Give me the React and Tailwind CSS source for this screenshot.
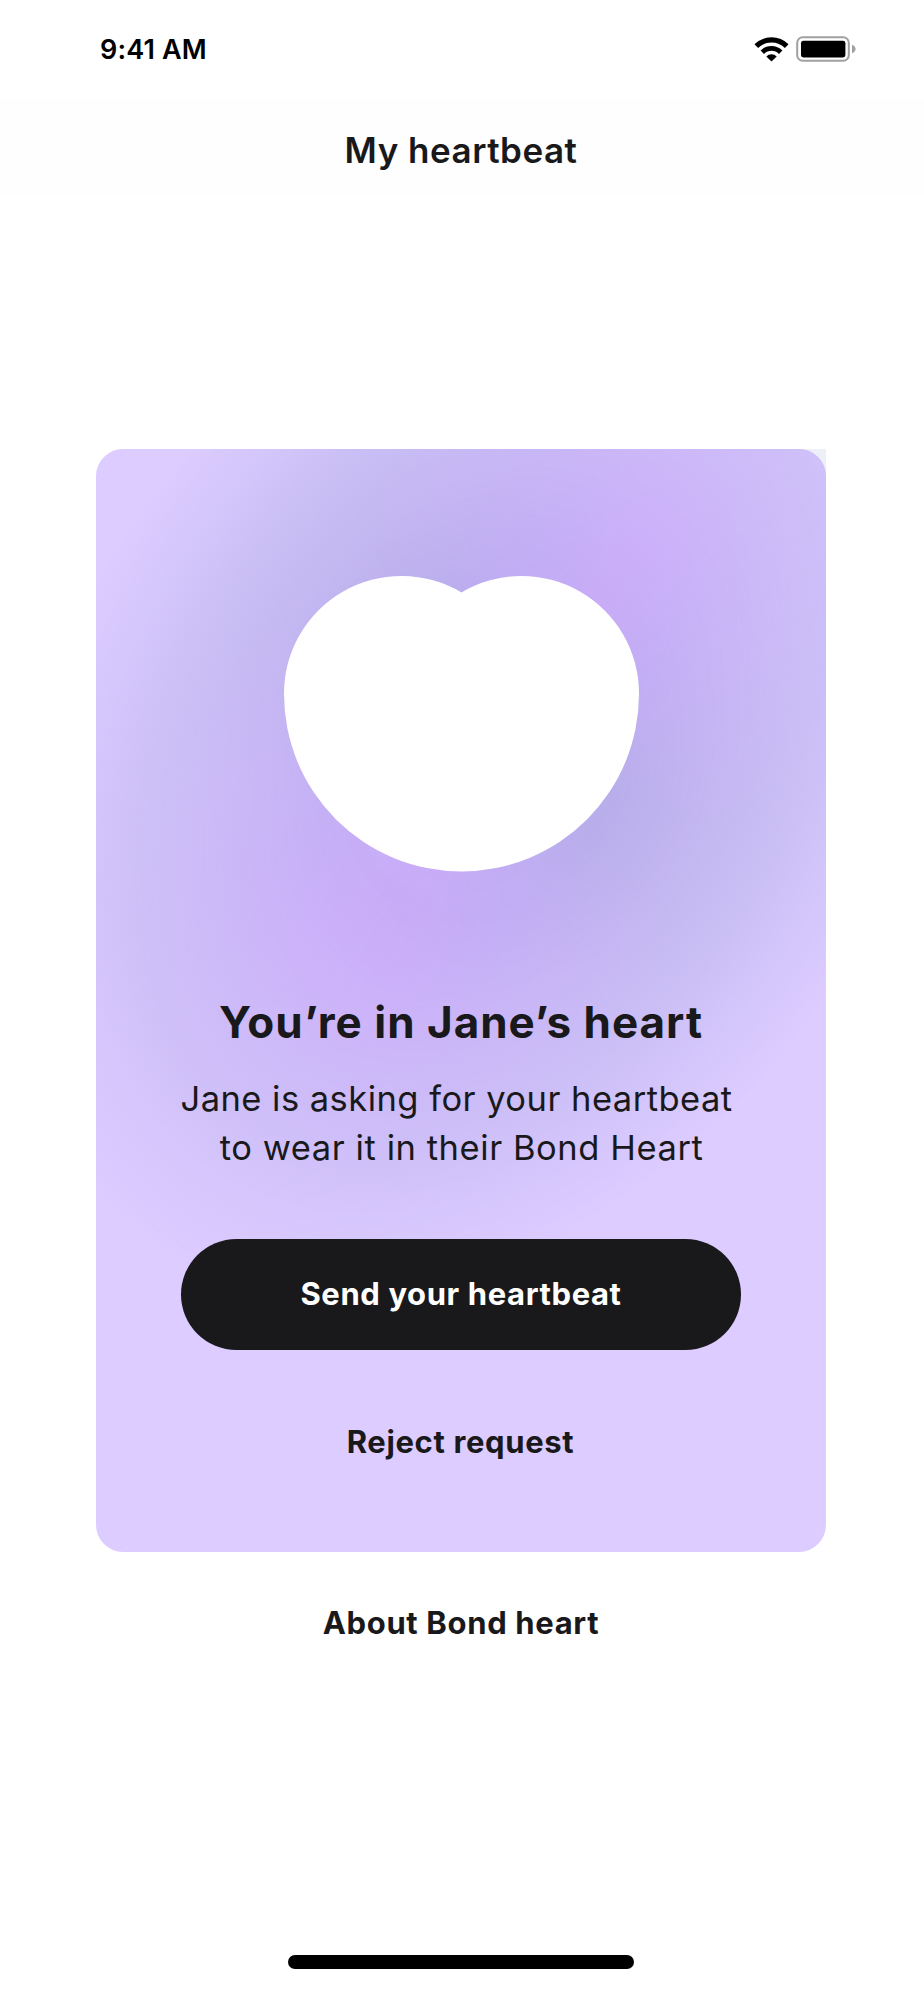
function WifiIcon() {
  return (
    <svg className="h-[25px] w-[35px]" viewBox="0 0 35 25" fill="none">
      <path d="M2.3 9.2a21.6 21.6 0 0 1 30.4 0" stroke="black" strokeWidth="5.2" />
      <path d="M8.3 15.2a13 13 0 0 1 18.4 0" stroke="black" strokeWidth="4.8" />
      <path d="M17.5 24.6l-5.2-5.2a7.4 7.4 0 0 1 10.4 0z" fill="black" />
    </svg>
  );
}

function BatteryIcon() {
  return (
    <svg className="h-[26px] w-[60px]" viewBox="0 0 60 26" fill="none">
      <rect x="1.2" y="1.2" width="51.6" height="23.6" rx="5.6" stroke="#a0a0a0" strokeWidth="2" />
      <rect x="5" y="4.8" width="44.4" height="16.6" rx="2.4" fill="black" />
      <path d="M56 8.8c2.2.8 3.6 2.4 3.6 4.2s-1.4 3.4-3.6 4.2z" fill="#a0a0a0" />
    </svg>
  );
}

function StatusBar() {
  return (
    <div className="flex h-[98px] items-start justify-between bg-white pt-[36px] pr-[68px] pl-[100px]">
      <span className="text-[27px] leading-7 font-semibold tracking-[0.15px] text-black">9:41 AM</span>
      <div className="flex items-center gap-[7px]">
        <WifiIcon />
        <BatteryIcon />
      </div>
    </div>
  );
}

function Heart() {
  return (
    <svg className="h-[296px] w-[355px]" viewBox="0 0 355 296">
      <path
        d="M0 118A117.5 117.5 0 0 1 177.5 16.5A117.5 117.5 0 0 1 355 118A177.5 177.5 0 0 1 0 118Z"
        fill="white"
      />
    </svg>
  );
}

// Soft two-tone halo behind the heart
function Glow() {
  return (
    <div className="absolute top-[-302px] left-[-28px] h-[1200px] w-[840px] rotate-[33deg]">
      <div className="size-full bg-[conic-gradient(rgba(188,154,243,0.68)_0deg,rgba(188,154,243,0.68)_8deg,rgba(178,160,236,0.7)_42deg,rgba(172,163,228,0.78)_75deg,rgba(172,163,228,0.78)_100deg,rgba(178,160,236,0.72)_130deg,rgba(188,154,243,0.68)_168deg,rgba(188,154,243,0.66)_190deg,rgba(178,160,236,0.66)_230deg,rgba(172,163,228,0.78)_268deg,rgba(172,163,228,0.8)_300deg,rgba(178,160,236,0.74)_332deg,rgba(188,154,243,0.68)_360deg)] mask-[radial-gradient(closest-side,rgba(0,0,0,0.98)_0%,rgba(0,0,0,0.94)_32%,rgba(0,0,0,0.74)_48%,rgba(0,0,0,0.54)_62%,rgba(0,0,0,0.27)_78%,rgba(0,0,0,0.08)_92%,transparent_100%)]" />
      <div className="absolute inset-0 bg-[radial-gradient(closest-side,rgba(190,188,240,0)_48%,rgba(190,188,240,0.28)_70%,rgba(200,198,246,0.22)_86%,rgba(210,205,250,0)_100%)]" />
    </div>
  );
}

function RequestCard() {
  return (
    <div className="relative mt-[251px] ml-24 w-[730px]">
      <div className="absolute top-0 right-0 size-7 bg-[#eef0f7]" />
      <div className="relative flex h-[1103px] flex-col items-center overflow-hidden rounded-[27px] bg-[#ddccff] pt-[127px]">
        <Glow />
        <div className="relative flex flex-col items-center">
          <Heart />
          <h2 className="mt-[123px] text-[44px] leading-[54px] font-bold tracking-[1px] whitespace-nowrap">
            You’re in Jane’s heart
          </h2>
          <p className="mt-[25px] flex flex-col items-center text-[34.5px] leading-[49px] tracking-[0.47px] whitespace-nowrap">
            <span className="pr-[9px]">Jane is asking for your heartbeat</span>
            <span className="pl-px tracking-[0.56px]">to wear it in their Bond Heart</span>
          </p>
          <button className="mt-[67px] h-[111px] w-[560px] rounded-full bg-[#19191b] text-[31px] font-[650] tracking-[0.6px] text-white">
            Send your heartbeat
          </button>
          <button className="mt-[70px] mr-px text-[31px] leading-[44px] font-[650] tracking-[0.65px]">
            Reject request
          </button>
        </div>
      </div>
    </div>
  );
}

export default function App() {
  return (
    <div className="flex h-[2000px] w-[924px] flex-col bg-white font-['Inter',sans-serif] text-[#19191b]">
      <StatusBar />
      <header className="mb-[2px] flex h-[98px] items-center justify-center bg-[#fefefe] pt-[5px] pr-[2px]">
        <h1 className="text-[35px] leading-[46px] font-semibold tracking-[0.5px]">My heartbeat</h1>
      </header>
      <RequestCard />
      <button className="mt-[49px] mr-[2px] self-center text-[31px] leading-[44px] font-[650] tracking-[0.65px]">
        About Bond heart
      </button>
      <div className="mt-auto mb-[31px] ml-72 h-[14px] w-[346px] rounded-full bg-black" />
    </div>
  );
}
